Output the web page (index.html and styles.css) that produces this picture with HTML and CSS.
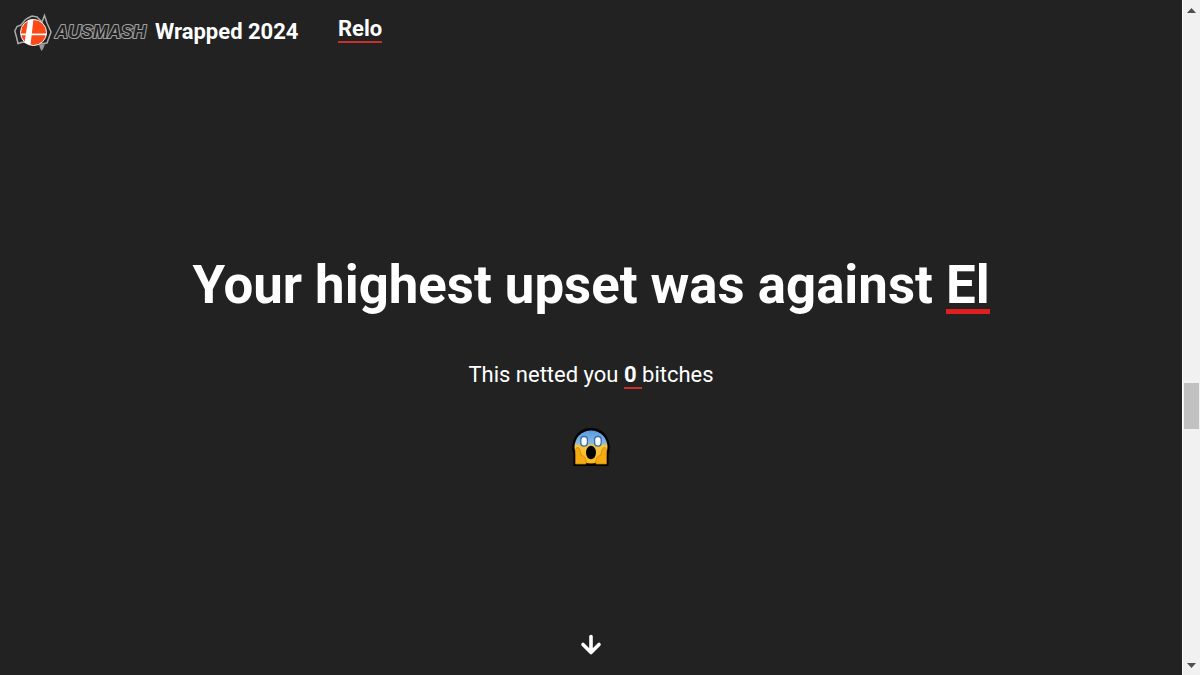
FILE: index.html
```
<!DOCTYPE html>
<html lang="en">
<head>
    <meta charset="utf-8">
    <title>Ausmash Wrapped 2024</title>
    <link rel="stylesheet" href="styles.css">
</head>
<body>

<div class="page">
    <header>
        <svg class="logo" width="136" height="42" viewBox="0 0 136 42">
            <path class="map" d="M8 12 L4 13.5 L1.8 18 L3.5 24 L5 30.5 L10 29 L28 31 L34 30 L38 19 L34 10 L31.5 2.5 L29 9 L24 4 L19 3 L15 5 L12 7 Z"/>
            <path class="tasmania" d="M26 31.5 L32 31.5 L30 36 L28.5 38 L27 35 Z"/>
            <circle class="ball" cx="20.5" cy="19.5" r="13"/>
            <path class="cross" d="M15 7 L20.5 6 L17.5 32 L11.5 30 Z M8 20.5 H33.5 V22.3 H8 Z"/>
            <text class="wordmark" x="42" y="25.2" textLength="91" lengthAdjust="spacingAndGlyphs">AUSMASH</text>
        </svg>
        <span class="title">Wrapped 2024</span>
        <a class="player">Relo</a>
    </header>

    <main>
        <h1>Your highest upset was against <span class="name">El</span></h1>
        <p>This netted you <b class="value">0&nbsp;</b>bitches</p>
        <svg class="emoji" width="38" height="38" viewBox="0 0 38 38">
            <defs>
                <linearGradient id="face" x1="0" y1="0" x2="0" y2="1">
                    <stop offset="0" stop-color="#5a9be0"/>
                    <stop offset="0.38" stop-color="#86b9e2"/>
                    <stop offset="0.46" stop-color="#f6c544"/>
                    <stop offset="1" stop-color="#fdb919"/>
                </linearGradient>
            </defs>
            <path class="outline" d="M1.5 38 V26 C0 22 0 20 0.5 17 C2 6 9 0 19 0 S36 6 37.5 17 C38 20 38 22 36.5 26 V38 Z"/>
            <circle cx="19" cy="19" r="16.5" fill="url(#face)"/>
            <path class="hand" d="M3.5 36 V23 C3.5 18 8 19 8 23 L9.5 27.5 C13 28 14.5 31 14 36 Z"/>
            <path class="hand" d="M34.5 36 V23 C34.5 18 30 19 30 23 L28.5 27.5 C25 28 23.5 31 24 36 Z"/>
            <rect class="eye" x="8.8" y="8.5" width="6.6" height="9.6" rx="3"/>
            <rect class="eye" x="22.6" y="8.5" width="6.6" height="9.6" rx="3"/>
            <ellipse cx="19" cy="24.5" rx="5" ry="6.7"/>
        </svg>
    </main>

    <footer>
        <svg width="22" height="22" viewBox="0 0 22 22">
            <path class="arrow" d="M11 2.5 V18.5 M3 10.5 L11 18.5 L19 10.5"/>
        </svg>
    </footer>
</div>

<div class="scrollbar">
    <svg width="9" height="5" viewBox="0 0 9 5"><path d="M0 5 L4.5 0 L9 5 Z"/></svg>
    <div class="thumb"></div>
    <svg width="9" height="5" viewBox="0 0 9 5"><path d="M0 0 L4.5 5 L9 0 Z"/></svg>
</div>

</body>
</html>
```

FILE: styles.css
```
* {
    box-sizing: border-box;
}

body {
    display: flex;
    height: 100vh;
    margin: 0;
    overflow: hidden;
    background: #222;
    color: #fff;
    font-family: Roboto, sans-serif;
    font-size: 22px;
}

.page {
    flex: 1;
    display: flex;
    flex-direction: column;
}

header {
    display: flex;
    align-items: flex-start;
    height: 62px;
    padding: 13px 0 0 13px;
    font-weight: bold;
}

.logo {
    overflow: visible;
}

.title {
    margin: 5px 0 0 6px;
    line-height: 27px;
}

.player {
    margin: 4px 0 0 39.5px;
    line-height: 24px;
    border-bottom: 2px solid #c9302c;
}

.map {
    fill: #222;
    stroke: #aaa;
    stroke-width: 1.5;
}

.tasmania {
    fill: #999;
}

.ball {
    fill: #fc4716;
    stroke: #fff;
    stroke-width: 1;
}

.cross {
    fill: #fff;
}

.wordmark {
    font-family: "Liberation Sans", sans-serif;
    font-size: 19px;
    font-weight: bold;
    font-style: italic;
    fill: #222;
    stroke: #a0a0a0;
    stroke-width: 2.2;
    stroke-linejoin: round;
    paint-order: stroke;
}

main {
    flex: 1;
    display: flex;
    flex-direction: column;
    align-items: center;
    padding-top: 191px;
}

h1 {
    margin: 0;
    font-size: 52.75px;
    line-height: 64px;
}

.name {
    display: inline-block;
    line-height: 48px;
    border-bottom: 5px solid #df1f1f;
}

p {
    margin: 45px 0 0;
    line-height: 26px;
}

.value {
    display: inline-block;
    line-height: 25px;
    border-bottom: 2px solid #c9302c;
}

.emoji {
    margin-top: 39px;
}

.hand {
    fill: #f5a912;
    stroke: #c77f08;
    stroke-width: 0.7;
}

.eye {
    fill: #fff;
    stroke: #336fae;
    stroke-width: 1.3;
}

footer {
    height: 41px;
    text-align: center;
    line-height: 0;
}

.arrow {
    fill: none;
    stroke: #fff;
    stroke-width: 3.6;
    stroke-linecap: round;
    stroke-linejoin: round;
}

.scrollbar {
    display: flex;
    flex-direction: column;
    align-items: center;
    width: 18px;
    padding: 8px 0 7px;
    background: #f1f1f1;
    border-left: 1px solid #fff;
    fill: #505050;
}

.thumb {
    width: 15px;
    height: 46px;
    margin: 370px 0 auto;
    background: #c1c1c1;
}
```
